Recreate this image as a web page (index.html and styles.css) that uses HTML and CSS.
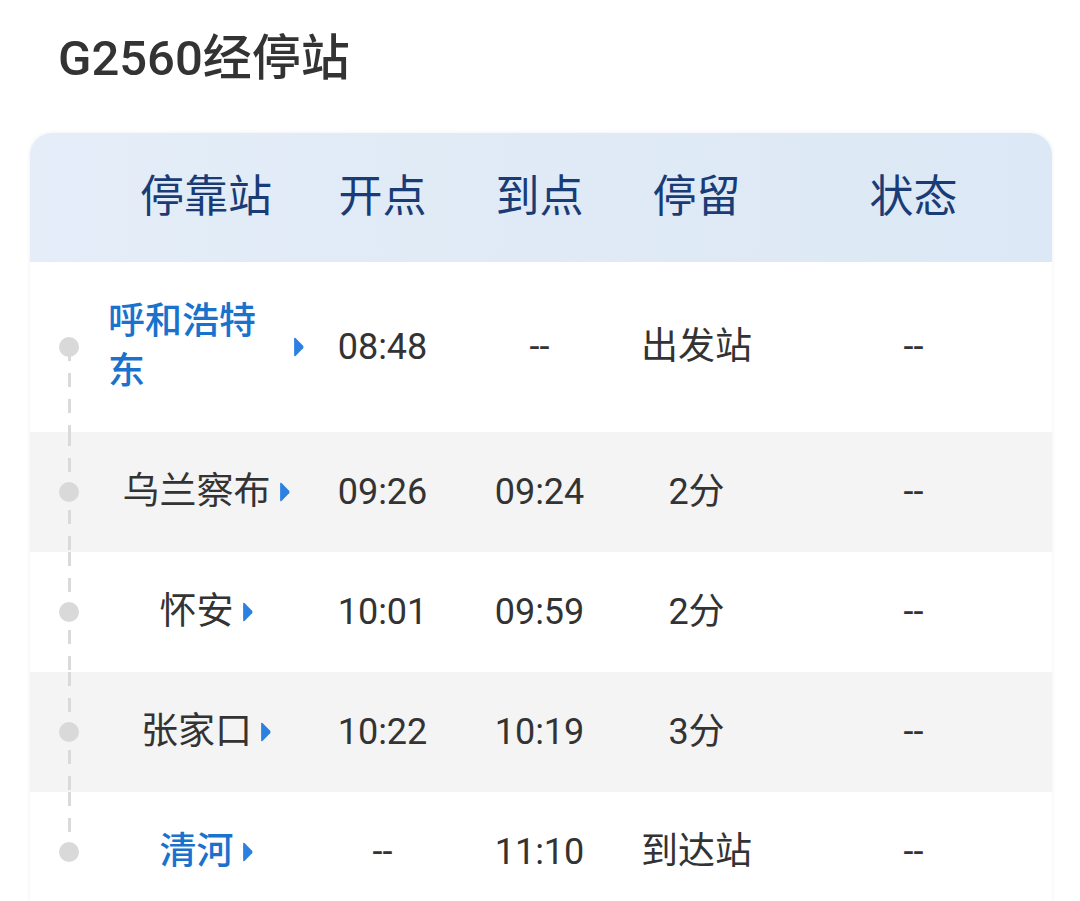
FILE: index.html
```html
<!DOCTYPE html>
<html lang="zh-CN">
<head>
<meta charset="utf-8">
<title>G2560经停站</title>
<link rel="stylesheet" href="styles.css">
</head>
<body>
<h1 class="title">G2560经停站</h1>
<div class="card">
  <div class="row head">
    <div class="cell tl-empty"></div>
    <div class="cell">停靠站</div>
    <div class="cell">开点</div>
    <div class="cell">到点</div>
    <div class="cell">停留</div>
    <div class="cell">状态</div>
  </div>
  <div class="row">
    <div class="cell tl first"></div>
    <div class="cell station"><span class="name hl">呼和浩特东</span><svg class="tri" viewBox="0 0 10 18" width="11" height="20"><path d="M1 1.5 Q1 0 2.3 0.9 L9.2 7.8 Q10 9 9.2 10.2 L2.3 17.1 Q1 18 1 16.5 Z" fill="#2b80e2"/></svg></div>
    <div class="cell">08:48</div>
    <div class="cell">--</div>
    <div class="cell cjk">出发站</div>
    <div class="cell">--</div>
  </div>
  <div class="row alt">
    <div class="cell tl"></div>
    <div class="cell station"><span class="name">乌兰察布</span><svg class="tri" viewBox="0 0 10 18" width="11" height="20"><path d="M1 1.5 Q1 0 2.3 0.9 L9.2 7.8 Q10 9 9.2 10.2 L2.3 17.1 Q1 18 1 16.5 Z" fill="#2b80e2"/></svg></div>
    <div class="cell">09:26</div>
    <div class="cell">09:24</div>
    <div class="cell">2分</div>
    <div class="cell">--</div>
  </div>
  <div class="row">
    <div class="cell tl"></div>
    <div class="cell station"><span class="name">怀安</span><svg class="tri" viewBox="0 0 10 18" width="11" height="20"><path d="M1 1.5 Q1 0 2.3 0.9 L9.2 7.8 Q10 9 9.2 10.2 L2.3 17.1 Q1 18 1 16.5 Z" fill="#2b80e2"/></svg></div>
    <div class="cell">10:01</div>
    <div class="cell">09:59</div>
    <div class="cell">2分</div>
    <div class="cell">--</div>
  </div>
  <div class="row alt">
    <div class="cell tl"></div>
    <div class="cell station"><span class="name">张家口</span><svg class="tri" viewBox="0 0 10 18" width="11" height="20"><path d="M1 1.5 Q1 0 2.3 0.9 L9.2 7.8 Q10 9 9.2 10.2 L2.3 17.1 Q1 18 1 16.5 Z" fill="#2b80e2"/></svg></div>
    <div class="cell">10:22</div>
    <div class="cell">10:19</div>
    <div class="cell">3分</div>
    <div class="cell">--</div>
  </div>
  <div class="row">
    <div class="cell tl last"></div>
    <div class="cell station"><span class="name hl">清河</span><svg class="tri" viewBox="0 0 10 18" width="11" height="20"><path d="M1 1.5 Q1 0 2.3 0.9 L9.2 7.8 Q10 9 9.2 10.2 L2.3 17.1 Q1 18 1 16.5 Z" fill="#2b80e2"/></svg></div>
    <div class="cell">--</div>
    <div class="cell">11:10</div>
    <div class="cell cjk">到达站</div>
    <div class="cell">--</div>
  </div>
</div>
</body>
</html>
```

FILE: styles.css
```css
html, body {
  margin: 0;
  padding: 0;
  background: #ffffff;
}
body {
  font-family: Roboto, "Noto Sans CJK SC", sans-serif;
  color: #333333;
  overflow: hidden;
}
.title {
  margin: 0;
  padding: 29px 0 0 58px;
  height: 133px;
  box-sizing: border-box;
  font-size: 49px;
  line-height: 60px;
  font-weight: 500;
  color: #333333;
}
.card {
  margin-left: 30px;
  width: 1022px;
  border-radius: 22px 22px 0 0;
  overflow: hidden;
  background: #ffffff;
  box-shadow: 0 0 4px rgba(0, 0, 0, 0.07);
}
.row {
  display: grid;
  grid-template-columns: 78px 196px 157px 157px 157px 1fr;
  font-size: 36px;
  line-height: 50px;
  background: #ffffff;
}
.row.alt {
  background: #f4f4f4;
}
.row.head {
  background: linear-gradient(90deg, #e4edf8 0%, #dfeaf6 60%, #dce8f5 100%);
  color: #1a3c76;
  font-size: 44px;
  line-height: 49px;
}
.cell {
  display: flex;
  align-items: center;
  justify-content: center;
  padding: 35px 0;
  text-align: center;
}
.head .cell {
  padding: 40px 0;
}
.cjk {
  font-size: 37px;
}
.station .name {
  max-width: 178px;
  text-align: left;
  font-size: 37px;
}
.name.hl {
  color: #1a72cc;
  font-weight: 500;
}
.tri {
  flex: none;
  margin-left: 8px;
}
.tl {
  position: relative;
  padding: 0;
}
.tl::before {
  content: "";
  position: absolute;
  left: 38px;
  top: 0;
  bottom: 0;
  width: 3px;
  background: repeating-linear-gradient(to bottom, #dadada 0 14px, transparent 14px 26px);
}
.tl.first::before {
  top: 50%;
}
.tl.last::before {
  bottom: 50%;
}
.tl::after {
  content: "";
  position: absolute;
  left: 29px;
  top: 50%;
  width: 20px;
  height: 20px;
  margin-top: -10px;
  border-radius: 50%;
  background: #d9d9d9;
}
```
